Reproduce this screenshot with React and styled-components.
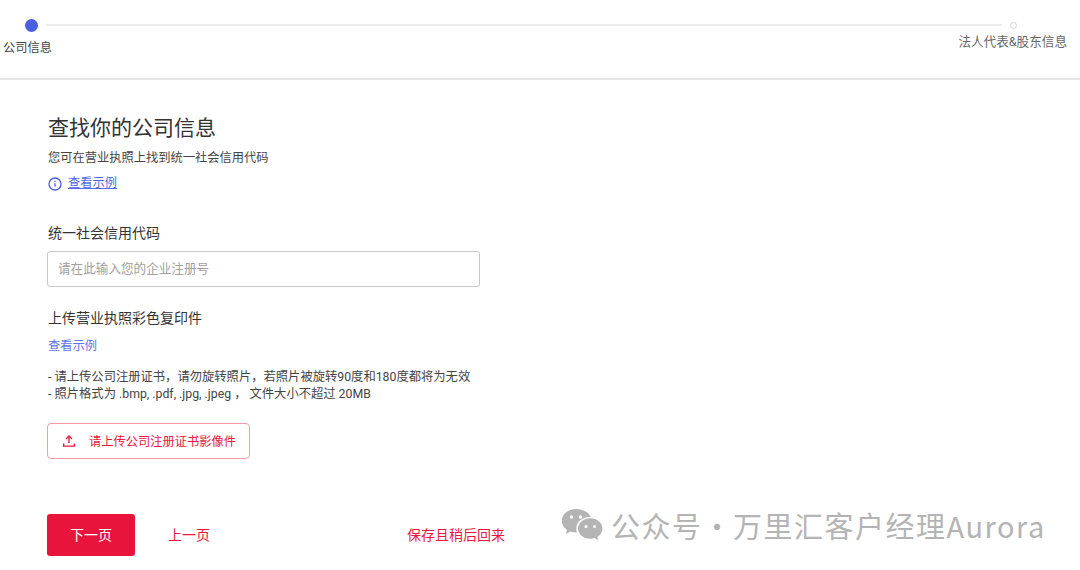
import React from 'react';
import styled, { createGlobalStyle } from 'styled-components';

const GlobalStyle = createGlobalStyle`
  html, body {
    margin: 0;
    padding: 0;
    background: #fff;
  }
  body {
    font-family: Roboto, "Liberation Sans", "Noto Sans CJK SC", sans-serif;
    color: #333;
  }
`;

const Page = styled.div`
  position: relative;
  width: 1080px;
  height: 570px;
  overflow: hidden;
`;

const Stepper = styled.div`
  height: 80px;
  box-sizing: border-box;
  border-bottom: 2px solid #e8e8e8;
  padding: 18px 13px 0 3px;
`;

const StepTrack = styled.div`
  display: flex;
  align-items: center;
  height: 14px;
`;

const FirstDot = styled.div`
  flex: none;
  width: 13px;
  height: 13px;
  margin-left: 22px;
  border-radius: 50%;
  background: #4a5ee0;
`;

const EndDot = styled.div`
  flex: none;
  width: 5px;
  height: 5px;
  margin-right: 50px;
  border: 1px solid #d4d4d4;
  border-radius: 50%;
`;

const StepLine = styled.div`
  flex: 1;
  height: 2px;
  margin: 0 8px;
  background: #ececec;
`;

const StepLabels = styled.div`
  display: flex;
  justify-content: space-between;
  align-items: flex-start;
`;

const StepLabel = styled.div`
  font-size: ${(p) => (p.$muted ? '12.6px' : '12.25px')};
  line-height: 16px;
  color: ${(p) => (p.$muted ? '#666' : '#444')};
  margin-top: ${(p) => (p.$muted ? '2px' : '8px')};
`;

const Form = styled.div`
  padding: 34px 0 0 47px;
  display: flex;
  flex-direction: column;
  align-items: flex-start;
`;

const Title = styled.h1`
  margin: 0 0 0 1px;
  font-size: 21px;
  line-height: 28px;
  font-weight: 400;
  color: #333;
`;

const Hint = styled.p`
  margin: 8px 0 0 1px;
  font-size: 12.25px;
  line-height: 17px;
  color: #444;
`;

const ExampleRow = styled.div`
  display: flex;
  align-items: center;
  gap: 6px;
  margin: 8px 0 0 1px;
`;

const ExampleLink = styled.a`
  font-size: 12.25px;
  line-height: 17px;
  color: ${(p) => (p.$plain ? '#5f73ea' : '#5468e4')};
  text-decoration: ${(p) => (p.$plain ? 'none' : 'underline')};
`;

const FieldLabel = styled.div`
  font-size: 14px;
  line-height: 20px;
  color: #333;
  margin: ${(p) => p.$top}px 0 0 1px;
`;

const TextInput = styled.input`
  width: 433px;
  height: 36px;
  margin-top: 8px;
  padding: 0 10px 2px;
  box-sizing: border-box;
  border: 1px solid #c9c9c9;
  border-radius: 3px;
  font: inherit;
  font-size: 12.6px;
  outline: none;

  &::placeholder {
    color: #a0a0a0;
    opacity: 1;
  }
`;

const PlainExample = styled.div`
  margin: 8px 0 0 1px;
  line-height: 17px;
`;

const Notes = styled.div`
  margin: 14px 0 0 1px;
  font-size: 12.3px;
  line-height: 17px;
  color: #444;
`;

const UploadButton = styled.button`
  display: flex;
  align-items: center;
  gap: 13px;
  width: 203px;
  height: 36px;
  margin-top: 20px;
  padding: 0 0 0 14px;
  box-sizing: border-box;
  background: #fff;
  border: 1px solid #f79aa9;
  border-radius: 4px;
  color: #e8173f;
  font: inherit;
  font-size: 12.25px;
`;

const Actions = styled.div`
  display: flex;
  align-items: center;
  margin-top: 55px;
`;

const PrimaryButton = styled.button`
  width: 88px;
  height: 42px;
  padding: 0 0 2px;
  background: #e8143c;
  border: 0;
  border-radius: 3px;
  color: #fff;
  font: inherit;
  font-size: 14px;
`;

const TextButton = styled.button`
  margin-left: ${(p) => p.$left}px;
  padding: 0 0 2px;
  background: none;
  border: 0;
  color: #e8173f;
  font: inherit;
  font-size: 14px;
`;

const Watermark = styled.div`
  position: absolute;
  left: 561px;
  top: 506px;
  display: flex;
  align-items: center;
  gap: 8px;
  color: #b4b4b4;
  font-family: "Noto Sans CJK SC", "Noto Sans", sans-serif;
  font-size: 29px;
  line-height: 38px;
  letter-spacing: 1.5px;
  word-spacing: -8px;
  white-space: nowrap;
`;

const InfoIcon = () => (
  <svg width="14" height="14" viewBox="0 0 14 14" fill="none" stroke="#4a5ee0" strokeWidth="1.3">
    <circle cx="7" cy="7" r="6" />
    <path d="M7 6.2v3.6" />
    <path d="M7 3.8v1.2" />
  </svg>
);

const UploadIcon = () => (
  <svg width="14" height="14" viewBox="0 0 14 14" fill="none" stroke="#e8173f" strokeWidth="1.4">
    <path d="M7 9V2.2" />
    <path d="M4 5l3-3 3 3" />
    <path d="M1.6 9.5v2.6h10.8V9.5" />
  </svg>
);

const WeChatIcon = () => (
  <svg width="42" height="34" viewBox="0 0 42 34">
    <path d="M15 1C7 1 .8 6.2.8 12.8c0 3.7 2 7 5.2 9.2l-1.2 4 4.6-2.4c1.8.5 3.6.8 5.6.8h1c-.5-1.3-.7-2.6-.7-4 0-6.4 6-11.5 13.5-11.5h1C28.4 4.8 22.3 1 15 1z" fill="#b4b4b4" />
    <path d="M41.5 20.5c0-5.6-5.5-10.2-12.2-10.2S17 14.9 17 20.5s5.5 10.2 12.3 10.2c1.5 0 3-.2 4.3-.7l3.7 2.3-1-3.4c3.4-1.9 5.2-5 5.2-8.4z" fill="#b4b4b4" />
    <circle cx="10.5" cy="9" r="1.7" fill="#fff" />
    <circle cx="19.5" cy="9" r="1.7" fill="#fff" />
    <circle cx="25" cy="18.5" r="1.5" fill="#fff" />
    <circle cx="33.5" cy="18.5" r="1.5" fill="#fff" />
  </svg>
);

const App = () => {
  return (
    <Page>
      <GlobalStyle />
      <Stepper>
        <StepTrack>
          <FirstDot />
          <StepLine />
          <EndDot />
        </StepTrack>
        <StepLabels>
          <StepLabel>公司信息</StepLabel>
          <StepLabel $muted>法人代表&amp;股东信息</StepLabel>
        </StepLabels>
      </Stepper>
      <Form>
        <Title>查找你的公司信息</Title>
        <Hint>您可在营业执照上找到统一社会信用代码</Hint>
        <ExampleRow>
          <InfoIcon />
          <ExampleLink>查看示例</ExampleLink>
        </ExampleRow>
        <FieldLabel $top={31}>统一社会信用代码</FieldLabel>
        <TextInput placeholder="请在此输入您的企业注册号" />
        <FieldLabel $top={21}>上传营业执照彩色复印件</FieldLabel>
        <PlainExample>
          <ExampleLink $plain>查看示例</ExampleLink>
        </PlainExample>
        <Notes>
          <div>- 请上传公司注册证书，请勿旋转照片，若照片被旋转90度和180度都将为无效</div>
          <div>- 照片格式为 .bmp, .pdf, .jpg, .jpeg ， 文件大小不超过 20MB</div>
        </Notes>
        <UploadButton>
          <UploadIcon />
          请上传公司注册证书影像件
        </UploadButton>
        <Actions>
          <PrimaryButton>下一页</PrimaryButton>
          <TextButton $left={33}>上一页</TextButton>
          <TextButton $left={197}>保存且稍后回来</TextButton>
        </Actions>
      </Form>
      <Watermark>
        <WeChatIcon />
        <span>公众号 · 万里汇客户经理Aurora</span>
      </Watermark>
    </Page>
  );
};

export default App;
